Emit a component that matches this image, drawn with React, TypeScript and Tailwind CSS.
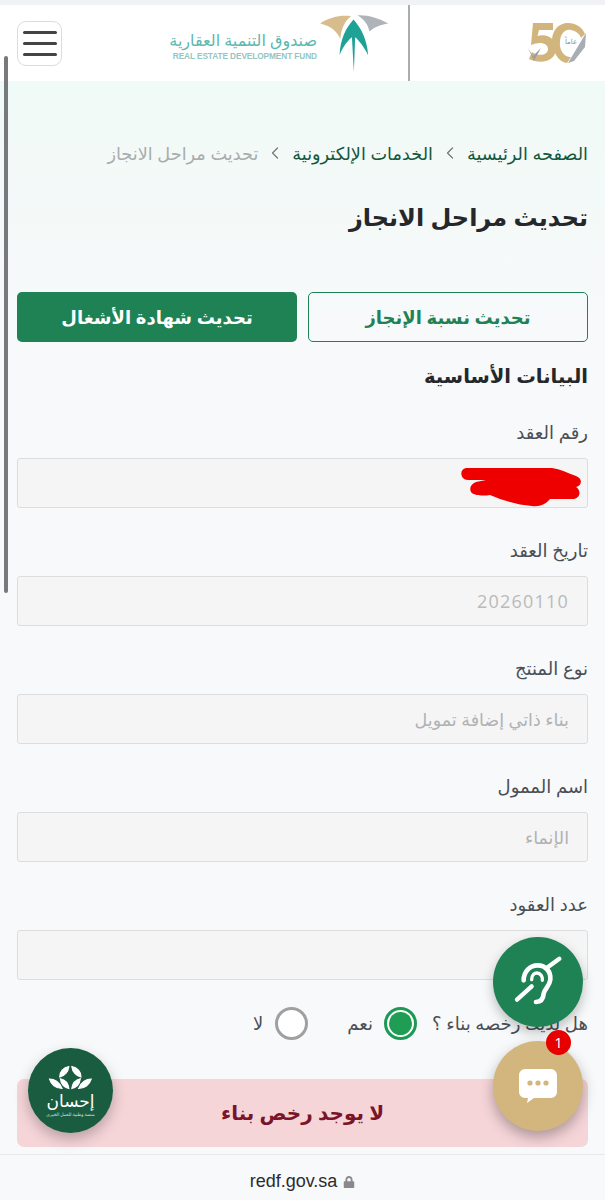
import { ChevronLeft } from "lucide-react";
import { FaLock } from "react-icons/fa";

const FIELDS = [
  { label: "رقم العقد", value: "", scribble: true },
  { label: "تاريخ العقد", value: "20260110" },
  { label: "نوع المنتج", value: "بناء ذاتي إضافة تمويل" },
  { label: "اسم الممول", value: "الإنماء" },
  { label: "عدد العقود", value: "" },
];

function Scribble() {
  return (
    <svg viewBox="0 0 122 42" className="absolute right-[5px] top-[8px] h-[42px] w-[122px]">
      <path
        d="M6 1 H92 C100 2 108 6 116 9 C123 12 122 18 116 20 C120 22 122 30 114 32 H90 C86 37 80 40 72 39 C58 38 44 34 30 28 C24 29 14 29 11 25 C9 21 11 17 16 15 L26 13 H8 C0 13 -1 2 6 1 Z"
        fill="#ee0000"
      />
    </svg>
  );
}

function Field({ label, value, scribble }: { label: string; value: string; scribble?: boolean }) {
  const isNumber = /^\d+$/.test(value);
  return (
    <div>
      <div className="mb-[13px] h-[26px] text-[18px] leading-[26px] text-[#4a4f55]">{label}</div>
      <div
        className={
          isNumber
            ? "relative flex h-[50px] items-center rounded-[3px] border border-[#dcdddf] bg-[#f5f5f6] px-[18px] font-['Open_Sans',sans-serif] text-[18px] tracking-[1.2px] text-[#bababa]"
            : "relative flex h-[50px] items-center rounded-[3px] border border-[#dcdddf] bg-[#f5f5f6] px-[18px] text-[17.5px] tracking-[0.6px] text-[#b0b2b4]"
        }
      >
        {value}
        {scribble && <Scribble />}
      </div>
    </div>
  );
}

function Anniversary() {
  return (
    <svg viewBox="0 0 60 44" className="h-[44px] w-[60px]">
      <path d="M6 2 H26 V9 H12 L10.5 15 C20 12 30 18 29 29 C28 40 14 44 2 38 L5 31 C12 36 21 34 21 28 C21 22 13 20 4 24 Z" fill="#d2b57c" />
      <path d="M41 2 C31 2 25 10 25 20 C26 31 31 41 40 42 L44 36 C36 36 32 28 33 20 C34 12 38 8 44 9 C49 10 53 13 54 17 L58 13 C55 6 49 2 41 2 Z" fill="#d2b57c" />
      <path d="M59 12 L41 42 L47 40 L58 26 Z" fill="#a7adb3" />
      <path d="M1 27 L6 35 L14 27 L7 40 Z" fill="#9aa0a5" />
      <text x="44" y="23" textAnchor="middle" fontSize="7" fill="#8a8f94">عاماً</text>
    </svg>
  );
}

function FundLogo() {
  return (
    <div className="flex items-center gap-[3px]">
      <svg viewBox="30 25 215 185" className="h-[60px] w-[70px]">
        <path d="M30 57 C60 38 95 30 125 35 C105 50 95 75 92 105 C85 85 65 65 30 57 Z" fill="#d7bd8e" />
        <path d="M240 57 C210 40 175 30 145 32 C165 45 178 60 182 82 C195 70 215 60 240 57 Z" fill="#aeb4ba" />
        <path d="M133 45 C155 70 175 105 178 155 C165 130 150 110 138 100 L134 207 L128 100 C115 110 100 130 90 155 C92 105 110 70 133 45 Z" fill="#1fa296" />
      </svg>
      <div className="flex flex-col items-end pt-[6px]" dir="ltr">
        <div dir="rtl" className="text-[16px] leading-[20px] font-medium text-[#5bb8b0]">صندوق التنمية العقارية</div>
        <div className="font-['Liberation_Sans',sans-serif] text-[8.3px] leading-[12px] font-bold tracking-[-0.1px] text-[#93c6c2]">REAL ESTATE DEVELOPMENT FUND</div>
      </div>
    </div>
  );
}

function IhsanBadge() {
  return (
    <div className="absolute bottom-[67px] left-[28px] flex h-[85px] w-[85px] flex-col items-center justify-center rounded-full bg-[#1a5c3f] pt-[1px] text-white shadow-[0_6px_14px_rgba(0,0,0,0.25)]">
      <svg viewBox="55 50 145 80" className="h-[25px] w-[45px]">
        <g fill="#fff" stroke="#fff" strokeWidth="4">
          <path d="M122 55 C105 58 92 72 93 88 C108 85 120 72 122 55 Z" />
          <path d="M132 55 C149 58 162 72 161 88 C146 85 134 72 132 55 Z" />
          <path d="M95 94 C110 97 120 110 122 125 C107 122 97 110 95 94 Z" />
          <path d="M159 94 C144 97 134 110 132 125 C147 122 157 110 159 94 Z" />
          <path d="M60 95 C75 95 92 105 100 125 C80 125 65 112 60 95 Z" />
          <path d="M194 95 C179 95 162 105 154 125 C174 125 189 112 194 95 Z" />
        </g>
      </svg>
      <div className="mt-[1px] text-[17px] leading-[20px] font-medium">إحسان</div>
      <div className="text-[4.5px] leading-[6px] opacity-80">منصة وطنية للعمل الخيري</div>
    </div>
  );
}

function EarIcon() {
  return (
    <svg viewBox="-4 0 210 210" className="h-[70px] w-[70px]" fill="none" stroke="#fff" strokeLinecap="round">
      <path d="M58 100 C58 72 78 55 100 55 C125 55 140 75 138 98 C136 118 120 125 118 140 C117 155 110 165 95 165" strokeWidth="14" />
      <path d="M82 98 C82 85 90 78 98 78 C108 78 116 88 114 100" strokeWidth="10" />
      <path d="M38 158 L82 118 M128 62 L165 35" strokeWidth="13" />
    </svg>
  );
}

export default function App() {
  return (
    <div
      dir="rtl"
      className="relative flex h-[1200px] flex-col overflow-hidden bg-[#f8f9fb] font-['Noto_Sans','DejaVu_Sans',sans-serif]"
    >
      <div className="h-[5px] bg-[#f0f2f5]" />
      <header className="flex h-[76px] items-stretch bg-white pr-[18px] pl-[17px]">
        <div className="flex w-[177px] items-center">
          <Anniversary />
        </div>
        <div className="w-[2px] bg-[#a9adb0]" />
        <div className="flex flex-1 items-center pr-[18px]">
          <FundLogo />
        </div>
        <div className="flex items-center">
          <button className="flex h-[45px] w-[45px] flex-col items-center justify-center gap-[8px] rounded-[9px] border border-[#dcdcdc]">
            <span className="h-[3px] w-[34px] rounded-full bg-[#444]" />
            <span className="h-[3px] w-[34px] rounded-full bg-[#444]" />
            <span className="h-[3px] w-[34px] rounded-full bg-[#444]" />
          </button>
        </div>
      </header>

      <main className="flex-1 bg-linear-to-b from-[#f0faf6] from-0% to-[#f8f9fb] to-[270px] px-[17px] pt-[58px]">
        <nav className="flex h-[28px] items-center gap-[7px] text-[17.7px] text-[#14573c]">
          <span>الصفحه الرئيسية</span>
          <ChevronLeft className="h-[20px] w-[20px] text-[#777]" strokeWidth={1.5} />
          <span>الخدمات الإلكترونية</span>
          <ChevronLeft className="h-[20px] w-[20px] text-[#777]" strokeWidth={1.5} />
          <span className="text-[#a9acae]">تحديث مراحل الانجاز</span>
        </nav>
        <h1 className="mt-[30px] h-[40px] text-[24px] leading-[40px] font-semibold text-[#24282b]">تحديث مراحل الانجاز</h1>
        <div className="mt-[55px] grid grid-cols-2 gap-[11px]">
          <button className="h-[50px] rounded-[5px] border border-[#1e8254] bg-transparent text-[18px] font-semibold text-[#1e8254]">تحديث نسبة الإنجاز</button>
          <button className="h-[50px] rounded-[5px] bg-[#1e8254] text-[18px] font-semibold text-white">تحديث شهادة الأشغال</button>
        </div>
        <h2 className="mt-[19px] h-[30px] text-[19.6px] leading-[30px] font-semibold text-[#24282b]">البيانات الأساسية</h2>
        <div className="mt-[28px] flex flex-col gap-[29px]">
          {FIELDS.map((f) => (
            <Field key={f.label} label={f.label} value={f.value} scribble={f.scribble} />
          ))}
        </div>
        <div className="mt-[25px] flex h-[36px] items-center text-[18px] text-[#4a4f55]">
          <span>هل لديك رخصه بناء ؟</span>
          <span className="mr-[15px] flex h-[33px] w-[33px] items-center justify-center rounded-full border-[3px] border-[#1c9a54] bg-white">
            <span className="h-[23px] w-[23px] rounded-full bg-[#1f9d55]" />
          </span>
          <span className="mr-[11px]">نعم</span>
          <span className="mr-[39px] h-[33px] w-[33px] rounded-full border-[3px] border-[#a0a0a0] bg-white" />
          <span className="mr-[12px]">لا</span>
        </div>
        <div className="mt-[38px] flex h-[68px] items-center justify-center rounded-[7px] bg-[#f6d5d9] text-[20px] font-semibold text-[#7a1428]">
          لا يوجد رخص بناء
        </div>
      </main>

      <footer className="flex h-[46px] items-center justify-center gap-[6px] border-t border-[#e8e9eb] bg-[#f8f9fb] pt-[8px] text-[18px] text-[#2c2c2e]" dir="ltr">
        <span className="font-['Liberation_Sans',sans-serif]">redf.gov.sa</span>
        <FaLock className="h-[12px] w-[12px] text-[#8a8a8e]" />
      </footer>

      <div className="absolute right-[22px] bottom-[173px] flex h-[90px] w-[90px] items-center justify-center rounded-full bg-[#1e8254] shadow-[0_5px_12px_rgba(0,0,0,0.25)]">
        <EarIcon />
      </div>
      <div className="absolute right-[22px] bottom-[69px] flex h-[90px] w-[90px] items-center justify-center rounded-full bg-[#d2b67e] shadow-[0_6px_14px_rgba(0,0,0,0.3)]">
        <svg viewBox="0 0 38 34" className="h-[34px] w-[38px]">
          <path d="M6 0 H32 C35 0 38 3 38 6 V23 C38 26 35 29 32 29 H15 L8 34 L9 29 H6 C3 29 0 26 0 23 V6 C0 3 3 0 6 0 Z" fill="#fff" />
          <circle cx="11" cy="14" r="2.6" fill="#d2b67e" />
          <circle cx="19" cy="14" r="2.6" fill="#d2b67e" />
          <circle cx="27" cy="14" r="2.6" fill="#d2b67e" />
        </svg>
        <span className="absolute -top-[11px] right-[12px] flex h-[25px] w-[25px] items-center justify-center rounded-full bg-[#e60000] text-[14px] text-white">1</span>
      </div>
      <IhsanBadge />

      <div className="absolute top-[56px] left-[4px] h-[537px] w-[4px] rounded-full bg-[#77797c]" />
    </div>
  );
}
